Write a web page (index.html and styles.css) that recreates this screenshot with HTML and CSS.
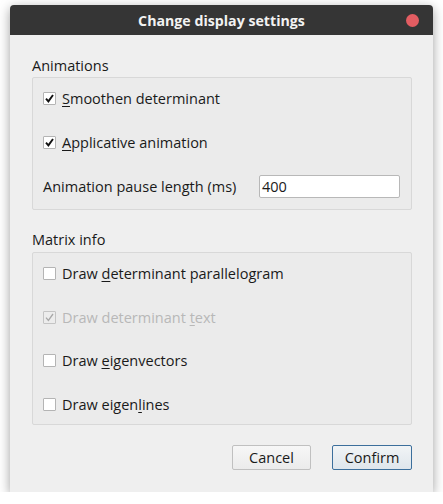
FILE: index.html
```html
<!DOCTYPE html>
<html>
<head>
<meta charset="utf-8">
<link rel="stylesheet" href="styles.css">
</head>
<body>
<div class="window">
  <div class="titlebar">
    <span class="title">Change display settings</span>
    <span class="close"></span>
  </div>
  <div class="content">
    <div class="group-label">Animations</div>
    <div class="group">
      <label class="row"><span class="box checked"><svg viewBox="0 0 11 11"><path d="M2 5.6 L4.4 8.4 L9 2" /></svg></span><span class="text"><u>S</u>moothen determinant</span></label>
      <label class="row"><span class="box checked"><svg viewBox="0 0 11 11"><path d="M2 5.6 L4.4 8.4 L9 2" /></svg></span><span class="text"><u>A</u>pplicative animation</span></label>
      <div class="row field">
        <span class="text">Animation pause length (ms)</span>
        <span class="input">400</span>
      </div>
    </div>
    <div class="group-label second">Matrix info</div>
    <div class="group matrix">
      <label class="row"><span class="box"></span><span class="text">Draw <u>d</u>eterminant parallelogram</span></label>
      <label class="row disabled"><span class="box checked"><svg viewBox="0 0 11 11"><path d="M2 5.6 L4.4 8.4 L9 2" /></svg></span><span class="text">Draw determinant <u>t</u>ext</span></label>
      <label class="row"><span class="box"></span><span class="text">Draw <u>e</u>igenvectors</span></label>
      <label class="row"><span class="box"></span><span class="text">Draw eigen<u>l</u>ines</span></label>
    </div>
    <div class="buttons">
      <button class="btn">Cancel</button>
      <button class="btn primary">Confirm</button>
    </div>
  </div>
</div>
</body>
</html>
```
FILE: styles.css
```css
html, body {
  margin: 0;
  background: #ffffff;
}
body {
  padding: 5px 10px 0 10px;
  font-family: "Open Sans", "Noto Sans", sans-serif;
  font-size: 14.5px;
  color: #1a1a1a;
}
.window {
  width: 423px;
  height: 487px;
  background: #efefef;
  border-radius: 4px 4px 0 0;
  box-shadow: 0 3px 12px rgba(0, 0, 0, 0.38);
  display: flex;
  flex-direction: column;
}
.titlebar {
  height: 30px;
  background: #353535;
  border-radius: 4px 4px 0 0;
  display: flex;
  align-items: center;
  justify-content: center;
  position: relative;
}
.title {
  color: #f2f2f2;
  font-weight: bold;
  font-size: 14.2px;
}
.close {
  position: absolute;
  right: 14px;
  top: 9px;
  width: 13px;
  height: 13px;
  border-radius: 50%;
  background: #e35d62;
}
.content {
  padding: 22px 21px 0 22px;
  display: flex;
  flex-direction: column;
}
.group-label {
  height: 18px;
  line-height: 18px;
  margin-bottom: 2px;
}
.group-label.second {
  margin-top: 21px;
  margin-bottom: 3px;
}
.group {
  border: 1px solid #d8d8d8;
  border-radius: 2px;
  background: #ebebeb;
  padding: 9px 10px 11px 10px;
  display: flex;
  flex-direction: column;
  gap: 21px;
}
.group.matrix {
  gap: 20.5px;
  padding-bottom: 8.5px;
}
.row {
  height: 23px;
  display: flex;
  align-items: center;
}
.box {
  width: 11px;
  height: 11px;
  border: 1px solid #b4b4b4;
  border-radius: 1px;
  background: #ffffff;
  margin-right: 6px;
  display: flex;
}
.box svg {
  width: 11px;
  height: 11px;
  fill: none;
  stroke: #111111;
  stroke-width: 1.9;
}
.text u {
  text-underline-offset: 2px;
}
.disabled .text {
  color: #b8b8b8;
}
.disabled .box {
  background: #ececec;
  border-color: #c4c4c4;
}
.disabled .box svg {
  stroke: #a8a8a8;
  stroke-width: 1.3;
}
.field {
  justify-content: space-between;
}
.input {
  width: 137px;
  height: 21px;
  line-height: 21px;
  border: 1px solid #b8b8b8;
  border-radius: 2px;
  background: #ffffff;
  padding-left: 2px;
  margin-right: 1px;
  box-sizing: content-box;
}
.buttons {
  margin-top: 20px;
  display: flex;
  justify-content: flex-end;
  gap: 21px;
}
.btn {
  height: 25px;
  width: 79px;
  font-family: "Open Sans", "Noto Sans", sans-serif;
  font-size: 14.5px;
  color: #1a1a1a;
  border: 1px solid #c0c0c0;
  border-radius: 2px;
  background: linear-gradient(#f7f7f7, #ebebeb);
  padding: 0;
}
.btn.primary {
  width: 80px;
  border-color: #3c6f9c;
  background: linear-gradient(#f1f4f6, #dfe6ec);
}
```
